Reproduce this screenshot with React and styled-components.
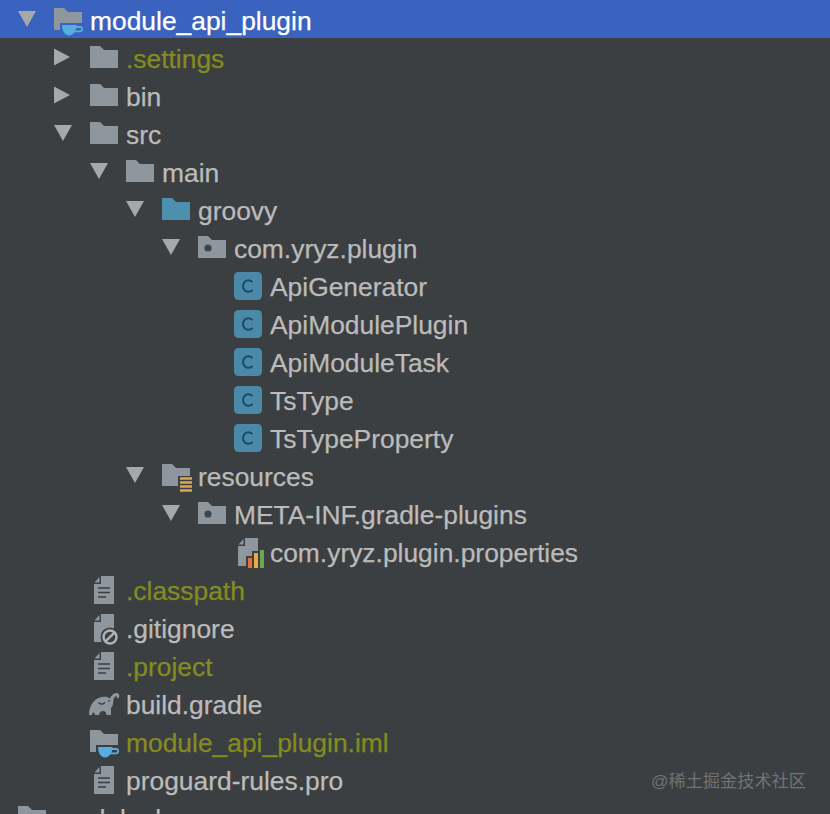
import React from 'react';
import styled, { createGlobalStyle } from 'styled-components';

const BG = '#3c3f41';
const SELECTED = '#3a62bf';
const GREY = '#8e979d';
const FOLDER_PATH = 'M0 3H10L14 7H28V25H0Z';

const GlobalStyle = createGlobalStyle`
  html, body {
    margin: 0;
    padding: 0;
    background: ${BG};
  }
`;

const Panel = styled.div`
  position: relative;
  width: 830px;
  height: 814px;
  overflow: hidden;
  background: ${BG};
  font-family: 'Liberation Sans', Arial, sans-serif;
`;

const Row = styled.div`
  display: flex;
  align-items: center;
  height: 38px;
  background: ${({ selected }) => (selected ? SELECTED : 'transparent')};
`;

const ArrowSlot = styled.span`
  flex: none;
  width: 36px;
  height: 38px;
  margin-left: ${({ level }) => 18 + level * 36}px;
  display: flex;
  align-items: center;
`;

const Icon = styled.svg`
  flex: none;
  display: block;
  width: 28px;
  height: 28px;
  overflow: visible;
`;

const Label = styled.span`
  margin-left: 8px;
  font-size: 26.4px;
  line-height: 38px;
  white-space: nowrap;
  position: relative;
  top: 2px;
  -webkit-text-stroke: 0.25px currentColor;
  color: ${({ selected, ignored }) => (selected ? '#ffffff' : ignored ? '#848c1f' : '#bbbbbb')};
`;

const Watermark = styled.div`
  position: absolute;
  right: 24px;
  top: 769px;
  font-family: 'Liberation Sans', 'Noto Sans CJK SC', sans-serif;
  font-size: 17.2px;
  line-height: 24px;
  color: #707274;
`;

const Arrow = ({ open }) => (
  <svg width="18" height="18" viewBox="0 0 18 18">
    <path d={open ? 'M0 1H18L9 17Z' : 'M0 0.5L16 9L0 17.5Z'} fill="#a6a8aa" />
  </svg>
);

const Cup = ({ gap }) => (
  <g>
    <path d="M6 18H30V32H6Z" fill={gap} />
    <path d="M8 20H22.5C22.5 26 19 30.5 15 30.5C11 30.5 8 26 8 20Z" fill="#58ade0" />
    <path d="M21.5 22H26.5C28.8 22 28.8 26.4 26 26.4H20" fill="none" stroke="#58ade0" strokeWidth="1.8" />
  </g>
);

const Folder = ({ color = GREY, children }) => (
  <Icon viewBox="0 0 28 28">
    <path d={FOLDER_PATH} fill={color} />
    {children}
  </Icon>
);

const PackageFolder = () => (
  <Folder>
    <circle cx="10" cy="15" r="3.6" fill="#3b4650" />
  </Folder>
);

const ModuleFolder = ({ gap }) => (
  <Folder>
    <Cup gap={gap} />
  </Folder>
);

const ResourceFolder = () => (
  <Folder>
    <path d="M16 15H32V33H16Z" fill={BG} />
    <path d="M18 17.5H30M18 21.5H30M18 25.5H30M18 29.5H30" stroke="#d9a84f" strokeWidth="2.6" />
  </Folder>
);

const ClassIcon = () => (
  <Icon viewBox="0 -1 28 28">
    <rect width="28" height="28" rx="4.5" fill="#4b89a8" />
    <path d="M18.5 10.2A5.4 5.8 0 1 0 18.5 17.8" fill="none" stroke="#1c4a6e" strokeWidth="2" />
  </Icon>
);

const FileShape = () => (
  <>
    <path d="M11 1H24V29H4V9H11Z" fill={GREY} />
    <path d="M9.5 2L4.5 7.5H9.5Z" fill={GREY} />
  </>
);

const TextFile = () => (
  <Icon viewBox="0 0 28 28">
    <FileShape />
    <path d="M8 13H20M8 17.5H20M8 22H16" stroke={BG} strokeWidth="1.7" />
  </Icon>
);

const IgnoredFile = () => (
  <Icon viewBox="0 0 28 28">
    <FileShape />
    <circle cx="20" cy="24" r="9.5" fill={BG} />
    <circle cx="20" cy="24" r="6.5" fill="none" stroke="#b0b4b7" strokeWidth="2.4" />
    <path d="M15.8 28.2L24.2 19.8" stroke="#b0b4b7" strokeWidth="2.4" />
  </Icon>
);

const PropertiesFile = () => (
  <Icon viewBox="0 0 28 28">
    <FileShape />
    <path d="M12 19H18V14H24V11H32V33H12Z" fill={BG} />
    <rect x="14" y="21" width="4" height="10" fill="#e2703a" />
    <rect x="20" y="16" width="4" height="15" fill="#e5a948" />
    <rect x="26" y="13" width="4" height="18" fill="#6aa84f" />
  </Icon>
);

const GradleIcon = () => (
  <Icon viewBox="0 0 28 28">
    <path
      d="M-1 26C-1 17 4 9 12 8C16 7.5 18 8 20 9.5C21 7 23.5 4 26.5 4C29 4 30 6.5 29 8.5C28.4 9.7 26.8 9.4 26.9 8C27 7 25.5 6.8 24.6 8C23.5 9.5 23.5 12 23 15C22.6 17.5 21.5 18 21 19V26H16.5C16.2 23.5 15 22 13 22C11 22 9.5 23.5 9 26H5C4.8 24.5 4.2 23.5 3.4 23.5C2.6 23.5 2 24.5 2 26Z"
      fill={GREY}
    />
    <path d="M8.5 13.5C10.5 15.5 13 15.5 15 13.5" fill="none" stroke={BG} strokeWidth="1.2" />
    <circle cx="19" cy="12" r="0.9" fill={BG} />
  </Icon>
);

const rows = [
  { level: 0, open: true, text: 'module_api_plugin', selected: true, icon: <ModuleFolder gap={SELECTED} /> },
  { level: 1, open: false, text: '.settings', ignored: true, icon: <Folder /> },
  { level: 1, open: false, text: 'bin', icon: <Folder /> },
  { level: 1, open: true, text: 'src', icon: <Folder /> },
  { level: 2, open: true, text: 'main', icon: <Folder /> },
  { level: 3, open: true, text: 'groovy', icon: <Folder color="#4d8fae" /> },
  { level: 4, open: true, text: 'com.yryz.plugin', icon: <PackageFolder /> },
  { level: 5, text: 'ApiGenerator', icon: <ClassIcon /> },
  { level: 5, text: 'ApiModulePlugin', icon: <ClassIcon /> },
  { level: 5, text: 'ApiModuleTask', icon: <ClassIcon /> },
  { level: 5, text: 'TsType', icon: <ClassIcon /> },
  { level: 5, text: 'TsTypeProperty', icon: <ClassIcon /> },
  { level: 3, open: true, text: 'resources', icon: <ResourceFolder /> },
  { level: 4, open: true, text: 'META-INF.gradle-plugins', icon: <PackageFolder /> },
  { level: 5, text: 'com.yryz.plugin.properties', icon: <PropertiesFile /> },
  { level: 1, text: '.classpath', ignored: true, icon: <TextFile /> },
  { level: 1, text: '.gitignore', icon: <IgnoredFile /> },
  { level: 1, text: '.project', ignored: true, icon: <TextFile /> },
  { level: 1, text: 'build.gradle', icon: <GradleIcon /> },
  { level: 1, text: 'module_api_plugin.iml', ignored: true, icon: <ModuleFolder gap={BG} /> },
  { level: 1, text: 'proguard-rules.pro', icon: <TextFile /> },
  { level: -1, text: 'module_base', icon: <Folder /> },
];

const TreeRow = ({ level, open, text, selected, ignored, icon }) => (
  <Row selected={selected}>
    <ArrowSlot level={level}>{open !== undefined && <Arrow open={open} />}</ArrowSlot>
    {icon}
    <Label selected={selected} ignored={ignored}>
      {text}
    </Label>
  </Row>
);

const App = () => (
  <Panel>
    <GlobalStyle />
    {rows.map((row) => (
      <TreeRow key={row.text + row.level} {...row} />
    ))}
    <Watermark>@稀土掘金技术社区</Watermark>
  </Panel>
);

export default App;
